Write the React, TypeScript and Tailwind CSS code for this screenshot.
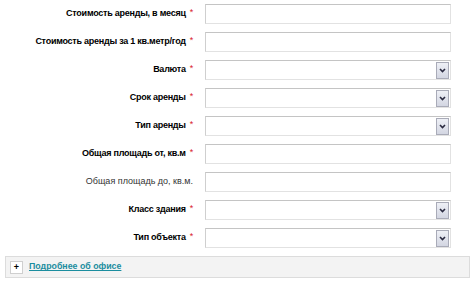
import { ReactNode } from 'react';

interface Field {
  label: string;
  required: boolean;
  kind: 'text' | 'select';
}

const fields: Field[] = [
  { label: 'Стоимость аренды, в месяц', required: true, kind: 'text' },
  { label: 'Стоимость аренды за 1 кв.метр/год', required: true, kind: 'text' },
  { label: 'Валюта', required: true, kind: 'select' },
  { label: 'Срок аренды', required: true, kind: 'select' },
  { label: 'Тип аренды', required: true, kind: 'select' },
  { label: 'Общая площадь от, кв.м', required: true, kind: 'text' },
  { label: 'Общая площадь до, кв.м.', required: false, kind: 'text' },
  { label: 'Класс здания', required: true, kind: 'select' },
  { label: 'Тип объекта', required: true, kind: 'select' },
];

function Box({ children }: { children?: ReactNode }) {
  return (
    <div className="h-[20px] w-[246px] border border-t-[#c4c4c4] border-l-[#cfcfcf] border-r-[#e2e2e2] border-b-[#e2e2e2] bg-white flex justify-end items-center pr-px">
      {children}
    </div>
  );
}

function SelectArrow() {
  return (
    <div className="h-[17px] w-[13px] border border-[#a9abb8] bg-gradient-to-b from-[#eef0f6] to-[#d3d6e2] flex items-center justify-center">
      <svg width="7" height="5" viewBox="0 0 7 5">
        <path d="M1 1 L3.5 3.5 L6 1" stroke="#2a2a40" strokeWidth="1.6" fill="none" />
      </svg>
    </div>
  );
}

export default function App() {
  return (
    <div className="w-[474px] h-[282px] bg-white pt-1 font-['Liberation_Sans',Arial,sans-serif] text-black">
      <div className="grid grid-cols-[193px_246px] gap-x-[12px] gap-y-2">
        {fields.map((f) => (
          <div key={f.label} className="contents">
            <div className="h-[20px] flex items-center justify-end whitespace-nowrap">
              {f.required ? (
                <span className="font-bold text-[9px] tracking-[-0.25px]">
                  {f.label}
                  <span className="text-[#d8202a] font-normal text-[9px] ml-[4px] relative -top-[1px]">*</span>
                </span>
              ) : (
                <span className="text-[#333] text-[9px]">{f.label}</span>
              )}
            </div>
            <Box>{f.kind === 'select' && <SelectArrow />}</Box>
          </div>
        ))}
      </div>
      <div className="mt-2 ml-[5px] w-[465px] h-[22px] bg-[#f3f3f3] border border-[#dcdcdc] flex items-center pl-[4px] gap-[6px]">
        <div className="w-[13px] h-[13px] bg-white border border-[#cfcfcf] flex items-center justify-center text-[9px] font-bold leading-none">
          +
        </div>
        <a href="#" className="text-[#1b8d9f] font-bold underline text-[8.8px]">
          Подробнее об офисе
        </a>
      </div>
    </div>
  );
}
